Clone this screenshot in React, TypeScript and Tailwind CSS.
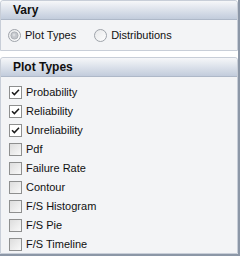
import * as React from "react";

const font = { fontFamily: '"Liberation Sans", Arial, sans-serif' };

const plotTypes = [
  { label: "Probability", checked: true },
  { label: "Reliability", checked: true },
  { label: "Unreliability", checked: true },
  { label: "Pdf", checked: false },
  { label: "Failure Rate", checked: false },
  { label: "Contour", checked: false },
  { label: "F/S Histogram", checked: false },
  { label: "F/S Pie", checked: false },
  { label: "F/S Timeline", checked: false },
];

const Radio = ({ selected }: { selected: boolean }) => (
  <svg width="13" height="13" viewBox="0 0 13 13" className="shrink-0">
    <defs>
      <linearGradient id="rfill" x1="0" y1="0" x2="1" y2="1">
        <stop offset="0" stopColor="#e6e7e9" />
        <stop offset="1" stopColor="#ffffff" />
      </linearGradient>
    </defs>
    <circle cx="6.5" cy="6.5" r="6" fill="url(#rfill)" stroke="#9ea3aa" />
    {selected && (
      <>
        <circle cx="6.5" cy="6.5" r="3.6" fill="#c3c6cb" stroke="#a4a8ae" strokeWidth="0.8" />
        <circle cx="6" cy="6" r="1.4" fill="#dcdee1" />
      </>
    )}
  </svg>
);

const Checkbox = ({ checked }: { checked: boolean }) => (
  <div
    className={
      "w-[13px] h-[13px] shrink-0 border border-[#8e8f8f] flex items-center justify-center " +
      (checked ? "bg-white" : "bg-gradient-to-br from-[#dddddd] to-[#f9f9f9]")
    }
  >
    {checked && (
      <svg width="9" height="9" viewBox="0 0 9 9">
        <path d="M1 4.2 L3.4 6.6 L8 1.8" fill="none" stroke="#1b1b1b" strokeWidth="1.5" />
      </svg>
    )}
  </div>
);

const Header = ({ title }: { title: string }) => (
  <div className="h-[19px] shrink-0 rounded-t-[3px] border-b border-[#aeb8c8] bg-gradient-to-b from-[#f6f7f9] to-[#c2ccdc] pl-[12px] flex items-center">
    <span className="text-[12px] font-bold text-[#101010] leading-none">{title}</span>
  </div>
);

export default function App() {
  return (
    <div
      className="w-[240px] h-[256px] bg-white border-r-2 border-b-2 border-[#8c97a7] flex flex-col overflow-hidden text-[11px] text-[#111]"
      style={font}
    >
      {/* Vary */}
      <div className="w-[238px] shrink-0 border border-[#c8ced8] rounded-t-[3px] bg-[#f3f4f6] flex flex-col">
        <Header title="Vary" />
        <div className="h-[30px] flex items-center pl-[7px] gap-[4px]">
          <Radio selected />
          <span>Plot Types</span>
          <div className="w-[10px]" />
          <Radio selected={false} />
          <span>Distributions</span>
        </div>
      </div>

      <div className="h-[6px] shrink-0" />

      {/* Plot Types */}
      <div className="w-[238px] h-[197px] shrink-0 border border-[#c8ced8] rounded-t-[3px] bg-[#f3f4f6] flex flex-col">
        <Header title="Plot Types" />
        <div className="flex flex-col pt-[6px] pl-[8px]">
          {plotTypes.map((p) => (
            <div key={p.label} className="h-[19px] flex items-center gap-[4px]">
              <Checkbox checked={p.checked} />
              <span>{p.label}</span>
            </div>
          ))}
        </div>
      </div>
    </div>
  );
}
